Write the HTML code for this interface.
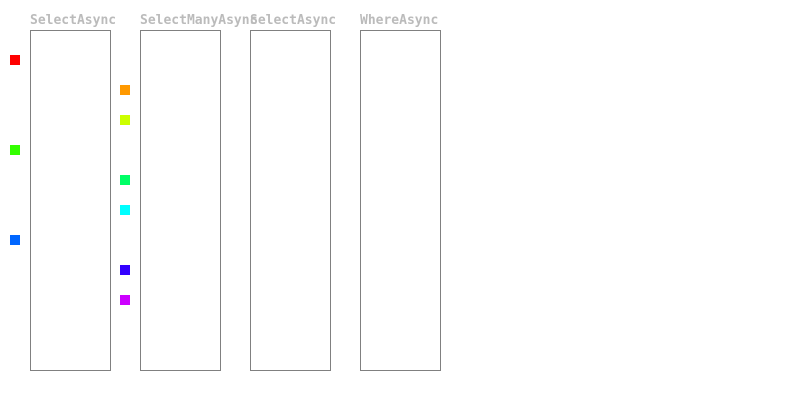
<!DOCTYPE html>
<html><head><style>
body{margin:0;width:800px;height:400px;background:#fff;position:relative;overflow:hidden;font-family:"DejaVu Sans Mono",monospace}
.t{position:absolute;top:13px;font-size:13px;line-height:16px;font-weight:bold;color:#bbb;white-space:nowrap}
.b{position:absolute;top:30px;width:79px;height:339px;border:1px solid #808080}
.s{position:absolute;width:10px;height:10px}
</style></head><body>
<div class="t" style="left:30px">SelectAsync</div>
<div class="t" style="left:140px">SelectManyAsync</div>
<div class="t" style="left:250px">SelectAsync</div>
<div class="t" style="left:360px">WhereAsync</div>
<div class="b" style="left:30px"></div>
<div class="b" style="left:140px"></div>
<div class="b" style="left:250px"></div>
<div class="b" style="left:360px"></div>
<div class="s" style="left:10px;top:55px;background:#ff0000"></div>
<div class="s" style="left:10px;top:145px;background:#33ff00"></div>
<div class="s" style="left:10px;top:235px;background:#0066ff"></div>
<div class="s" style="left:120px;top:85px;background:#ff9900"></div>
<div class="s" style="left:120px;top:115px;background:#ccff00"></div>
<div class="s" style="left:120px;top:175px;background:#00ff66"></div>
<div class="s" style="left:120px;top:205px;background:#00ffff"></div>
<div class="s" style="left:120px;top:265px;background:#3300ff"></div>
<div class="s" style="left:120px;top:295px;background:#cc00ff"></div>
</body></html>
